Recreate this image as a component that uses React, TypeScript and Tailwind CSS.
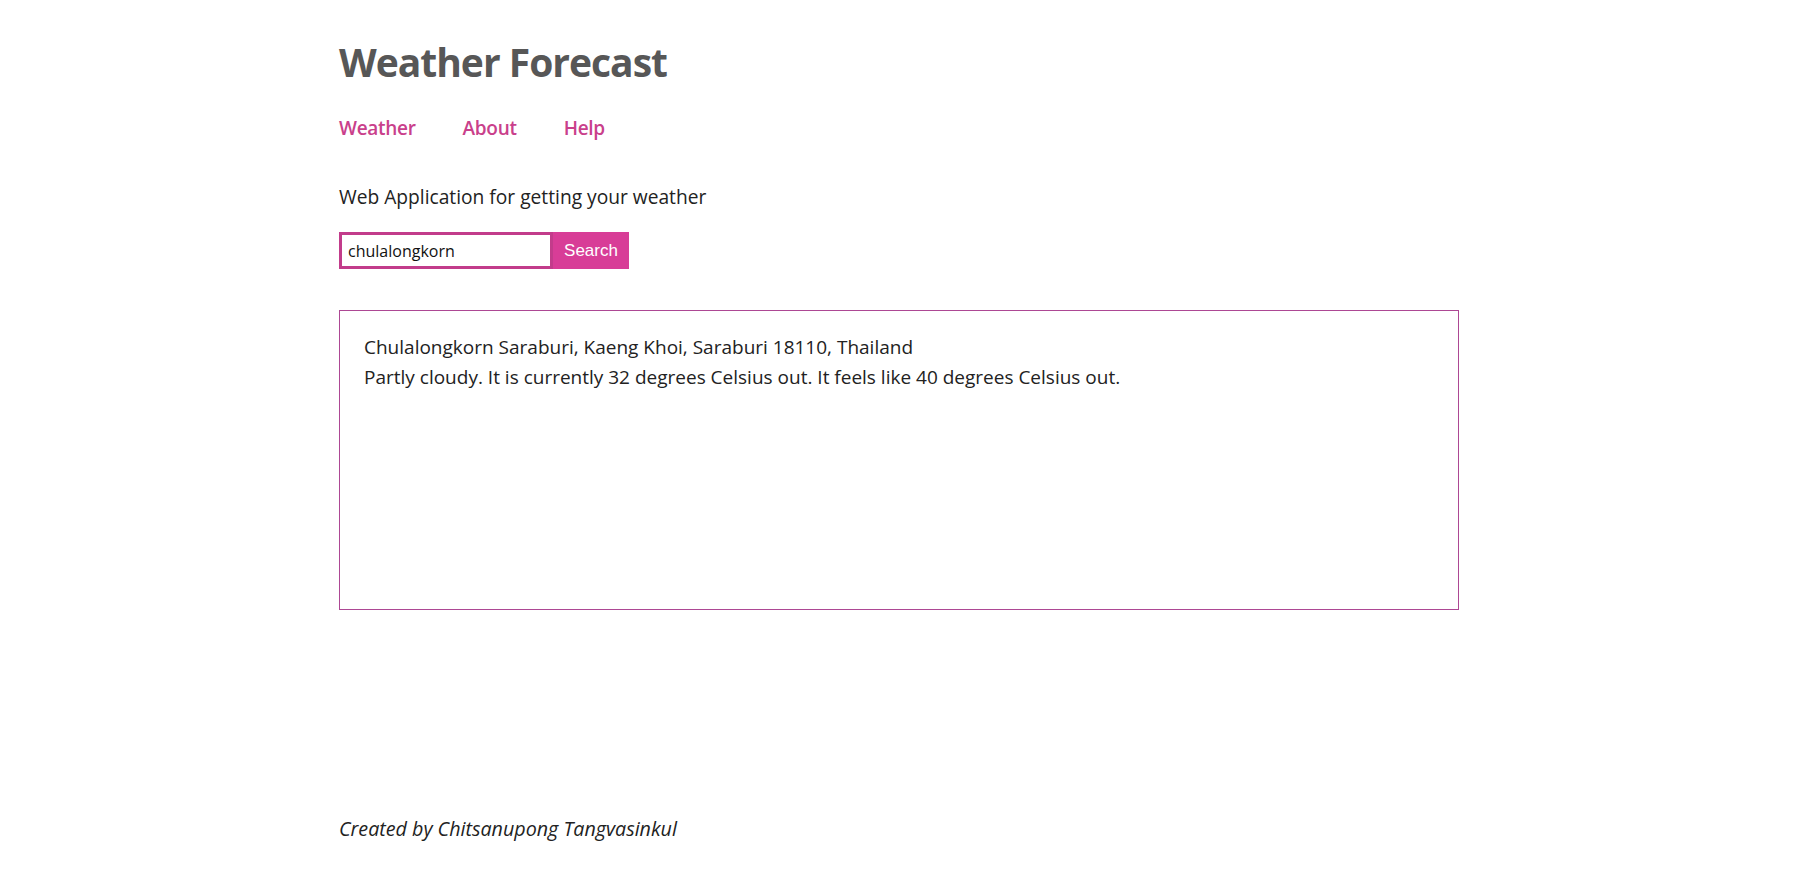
export default function App() {
  return (
    <div
      className="min-h-screen bg-white flex flex-col"
      style={{ fontFamily: '"Open Sans", "Noto Sans", sans-serif' }}
    >
      <div className="w-[1120px] ml-[339px] flex flex-col flex-1">
        <h1 className="pt-[36px] text-[39px] leading-[52px] font-bold tracking-[-1px] text-[#575757]">Weather Forecast</h1>
        <nav className="mt-[26px] flex gap-[47px] text-[19px] leading-[28px] font-semibold tracking-[-0.3px] text-[#c9408b]">
          <a href="#">Weather</a>
          <a href="#">About</a>
          <a href="#">Help</a>
        </nav>
        <p className="mt-[41px] text-[19.2px] leading-[28px] text-[#222]">Web Application for getting your weather</p>
        <form className="mt-[21px] flex h-[37px]" onSubmit={(e) => e.preventDefault()}>
          <input
            defaultValue="chulalongkorn"
            className="w-[214px] h-[37px] border-[3px] border-[#c23c8b] px-[6px] text-[16px] text-[#111] outline-none"
          />
          <button className="w-[76px] h-[37px] bg-[#d83d97] text-white text-[17px]" style={{ fontFamily: '"Liberation Sans", Arial, sans-serif' }}>
            Search
          </button>
        </form>
        <div className="mt-[41px] h-[300px] border border-[#ad4894] px-[24px] pt-[21px] pb-[19px] text-[19px] leading-[30px] text-[#222]">
          <p>Chulalongkorn Saraburi, Kaeng Khoi, Saraburi 18110, Thailand</p>
          <p>Partly cloudy. It is currently 32 degrees Celsius out. It feels like 40 degrees Celsius out.</p>
        </div>
        <footer className="mt-auto pb-[42px] text-[19.7px] leading-[30px] italic text-[#222]">
          Created by Chitsanupong Tangvasinkul
        </footer>
      </div>
    </div>
  );
}
